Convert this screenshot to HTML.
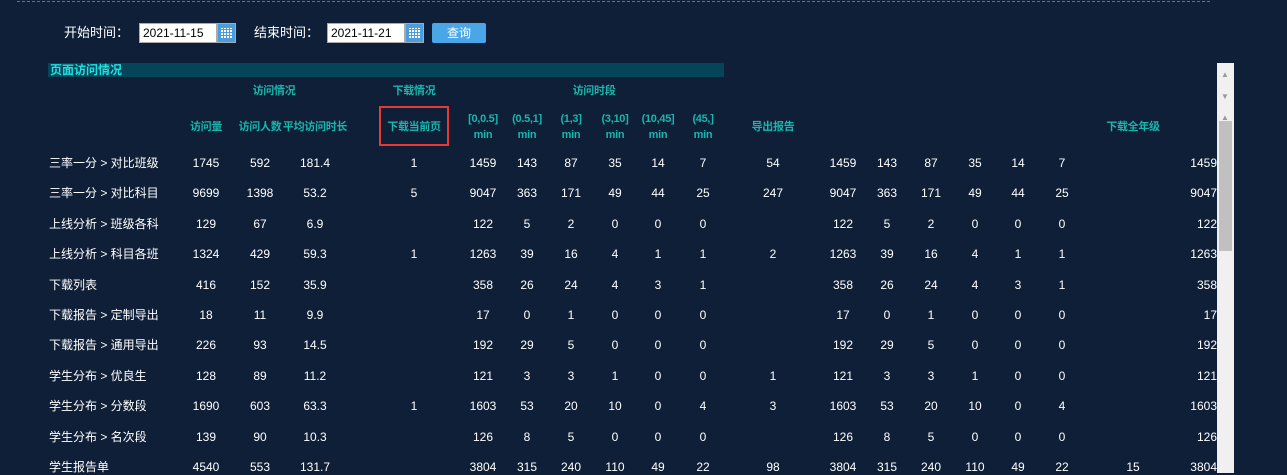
<!DOCTYPE html>
<html><head><meta charset="utf-8"><style>
body{margin:0;width:1287px;height:473px;background:#0f1f38;overflow:hidden;position:relative;font-family:"Liberation Sans","Noto Sans CJK SC",sans-serif;color:#fff;font-size:12px}
.a{position:absolute;white-space:nowrap;line-height:16px}
.c{transform:translateX(-50%);text-align:center}
.h{color:#1ab5ac;font-weight:bold;font-size:11px;letter-spacing:-0.3px}
.inp{position:absolute;top:23px;height:20px;background:#fff;border:1px solid #aaa;box-sizing:border-box;color:#000;font-size:12px;line-height:18px;padding-left:3px}
.cal{position:absolute;top:23px;width:19px;height:20px;background:#4a9ee0;border:1px solid #aaa;box-sizing:border-box}
.cal i{position:absolute;left:3px;top:4px;width:11px;height:10px;background:repeating-linear-gradient(90deg,#fff 0 2px,transparent 2px 3px),#4a9ee0;-webkit-mask:repeating-linear-gradient(0deg,#000 0 2px,transparent 2px 3px)}
</style></head><body>
<div class="a" style="left:17px;top:1px;width:1193px;border-top:1px dashed #2a8a9a"></div>
<div class="a" style="left:64px;top:25px;font-size:13px">开始时间：</div>
<div class="inp" style="left:139px;width:78px">2021-11-15</div>
<div class="cal" style="left:217px"><i></i></div>
<div class="a" style="left:254px;top:25px;font-size:13px">结束时间：</div>
<div class="inp" style="left:327px;width:78px">2021-11-21</div>
<div class="cal" style="left:405px"><i></i></div>
<div class="a" style="left:432px;top:23px;width:54px;height:20px;background:#4aa6e6;border-radius:2px;text-align:center;line-height:20px">查询</div>
<div class="a" style="left:48px;top:63px;width:676px;height:14px;background:#04455a"></div>
<div class="a" style="left:50px;top:63px;color:#22e0e0;font-weight:bold;line-height:14px">页面访问情况</div>
<div class="a c h" style="left:274px;top:83px">访问情况</div>
<div class="a c h" style="left:414px;top:83px">下载情况</div>
<div class="a c h" style="left:594px;top:83px">访问时段</div>
<div class="a" style="left:379px;top:106px;width:70px;height:40px;border:2px solid #e53935;box-sizing:border-box"></div>
<div class="a" style="left:1217px;top:63px;width:17px;height:410px;background:#f0f0f0"></div>
<div class="a" style="left:1219px;top:121px;width:13px;height:130px;background:#c0c0c0"></div>
<div class="a" style="left:1221px;top:67px;color:#999;font-size:8px">▲</div>
<div class="a" style="left:1221px;top:89px;color:#999;font-size:8px">▼</div>
<div class="a" style="left:1221px;top:110px;color:#999;font-size:8px">▲</div>
<div id="t"></div>
<script>
var X=[206,260,315,414,483,527,571,615,658,703,773,843,887,931,975,1018,1062,1133];
var H=["访问量","访问人数","平均访问时长","下载当前页","[0,0.5]<br>min","(0.5,1]<br>min","(1,3]<br>min","(3,10]<br>min","(10,45]<br>min","(45,]<br>min","导出报告","","","","","","","下载全年级"];
var R=[["三率一分 > 对比班级","1745 592 181.4 1 1459 143 87 35 14 7 54 1459 143 87 35 14 7 _ 1459"],
["三率一分 > 对比科目","9699 1398 53.2 5 9047 363 171 49 44 25 247 9047 363 171 49 44 25 _ 9047"],
["上线分析 > 班级各科","129 67 6.9 _ 122 5 2 0 0 0 _ 122 5 2 0 0 0 _ 122"],
["上线分析 > 科目各班","1324 429 59.3 1 1263 39 16 4 1 1 2 1263 39 16 4 1 1 _ 1263"],
["下载列表","416 152 35.9 _ 358 26 24 4 3 1 _ 358 26 24 4 3 1 _ 358"],
["下载报告 > 定制导出","18 11 9.9 _ 17 0 1 0 0 0 _ 17 0 1 0 0 0 _ 17"],
["下载报告 > 通用导出","226 93 14.5 _ 192 29 5 0 0 0 _ 192 29 5 0 0 0 _ 192"],
["学生分布 > 优良生","128 89 11.2 _ 121 3 3 1 0 0 1 121 3 3 1 0 0 _ 121"],
["学生分布 > 分数段","1690 603 63.3 1 1603 53 20 10 0 4 3 1603 53 20 10 0 4 _ 1603"],
["学生分布 > 名次段","139 90 10.3 _ 126 8 5 0 0 0 _ 126 8 5 0 0 0 _ 126"],
["学生报告单","4540 553 131.7 _ 3804 315 240 110 49 22 98 3804 315 240 110 49 22 15 3804"]];
var s="";
H.forEach(function(h,i){if(h)s+='<div class="a c h" style="left:'+X[i]+'px;top:'+(h.indexOf("br")>0?111:119)+'px;line-height:16px">'+h+'</div>';});
R.forEach(function(r,j){var y=155+j*30.4;s+='<div class="a" style="left:49px;top:'+y+'px;height:16px;overflow:visible">'+r[0]+'</div>';
var v=r[1].split(" ");v.forEach(function(t,i){if(t=="_")return;if(i==18)s+='<div class="a" style="right:70px;top:'+y+'px">'+t+'</div>';else s+='<div class="a c" style="left:'+X[i]+'px;top:'+y+'px">'+t+'</div>';});});
document.getElementById("t").innerHTML=s;
</script>
</body></html>
